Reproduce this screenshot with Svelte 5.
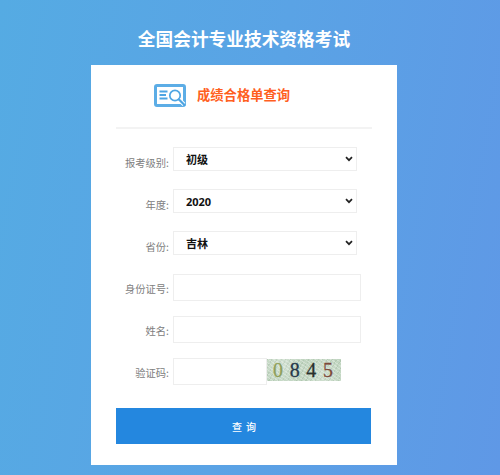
<script>
  const selects = [
    { label: '报考级别:', options: ['初级', '中级', '高级'] },
    { label: '年度:', options: ['2020', '2019', '2018'] },
    { label: '省份:', options: ['吉林', '北京', '上海'] }
  ];
  const inputs = ['身份证号:', '姓名:'];
  const digits = [
    { c: '0', color: '#8f9f5a' },
    { c: '8', color: '#26384a' },
    { c: '4', color: '#2a302c' },
    { c: '5', color: '#7d4a3a' }
  ];
</script>

<div class="page">
  <h1>全国会计专业技术资格考试</h1>
  <main class="card">
    <header class="head">
      <svg class="icon" width="33" height="24" viewBox="0 0 33 24" aria-hidden="true">
        <rect x="1.500" y="1.500" width="29" height="20" rx="1.500" fill="#fff" stroke="#5cade6" stroke-width="3"/>
        <path d="M5.500 7.500H13.500M5.500 11H12M5.500 14.500H13.500" stroke="#4ea5e3" stroke-width="1.800" fill="none"/>
        <circle cx="21" cy="11.500" r="6.800" fill="#fff"/>
        <circle cx="21" cy="11.500" r="5.200" fill="#fff" stroke="#4ea5e3" stroke-width="1.700"/>
        <path d="M25 15.500L30 20.500" stroke="#fff" stroke-width="4"/>
        <path d="M25 15.500L30.500 21" stroke="#4ea5e3" stroke-width="2.200" stroke-linecap="round"/>
      </svg>
      <span class="subtitle">成绩合格单查询</span>
    </header>

    <form class="form" onsubmit={(e) => e.preventDefault()}>
      {#each selects as s}
        <div class="row select-row">
          <span class="label">{s.label}</span>
          <select>
            {#each s.options as o}<option>{o}</option>{/each}
          </select>
        </div>
      {/each}
      {#each inputs as l}
        <div class="row">
          <span class="label">{l}</span>
          <input type="text" />
        </div>
      {/each}
      <div class="row">
        <span class="label">验证码:</span>
        <input class="code" type="text" />
        <div class="captcha">
          {#each digits as d}<span style="color: {d.color}">{d.c}</span>{/each}
        </div>
      </div>
      <button type="submit">查 询</button>
    </form>
  </main>
</div>

<style>
  :global(body) {
    margin: 0;
  }
  .page {
    box-sizing: border-box;
    height: 475px;
    padding-top: 26px;
    background: linear-gradient(100deg, #55abe3 0%, #5aa3e5 50%, #5f98e6 100%);
    font-family: "Noto Sans CJK SC", "Liberation Sans", sans-serif;
    overflow: hidden;
  }
  h1 {
    margin: 0 0 12px;
    width: 488px;
    height: 27px;
    line-height: 24px;
    text-align: center;
    font-size: 17.700px;
    font-weight: 700;
    color: #fff;
  }
  .card {
    box-sizing: border-box;
    width: 306px;
    height: 400px;
    margin-left: 91px;
    padding: 0 25px;
    background: #fff;
  }
  .head {
    display: flex;
    align-items: center;
    height: 62px;
    padding-left: 38px;
    border-bottom: 2px solid #f3f3f3;
  }
  .icon {
    margin-right: 10px;
    flex: none;
  }
  .subtitle {
    font-size: 13.300px;
    font-weight: 700;
    color: #ff5f1f;
    line-height: 20px;
    margin-bottom: 2px;
  }
  .form {
    display: flex;
    flex-direction: column;
    padding-top: 18px;
  }
  .row {
    display: flex;
    align-items: center;
    margin-bottom: 15px;
  }
  .select-row {
    margin-bottom: 18px;
  }
  .select-row:nth-child(3) {
    margin-bottom: 19px;
  }
  .label {
    box-sizing: border-box;
    width: 53px;
    margin-right: 4px;
    padding-top: 2px;
    flex: none;
    text-align: right;
    font-size: 10.300px;
    line-height: 14px;
    color: #808080;
    white-space: nowrap;
  }
  .select-row .label {
    padding-top: 8px;
  }
  select {
    box-sizing: border-box;
    width: 184px;
    height: 24px;
    padding: 0 8px 0 12px;
    border: 1px solid #eee;
    border-radius: 0;
    appearance: none;
    background: #fff url("data:image/svg+xml,%3Csvg xmlns='http://www.w3.org/2000/svg' width='8' height='6'%3E%3Cpath d='M1 1.200L4 4.200L7 1.200' fill='none' stroke='%23222' stroke-width='1.700'/%3E%3C/svg%3E") no-repeat right 3px center;
    color: #111;
    font-family: "Open Sans", "Noto Sans CJK SC", sans-serif;
    font-size: 11px;
    font-weight: 700;
    outline: none;
  }
  input {
    box-sizing: border-box;
    width: 188px;
    height: 27px;
    border: 1px solid #eee;
    background: #fff;
    outline: none;
    padding: 0 8px;
  }
  .code {
    width: 94px;
  }
  .captcha {
    align-self: flex-start;
    display: flex;
    justify-content: space-between;
    align-items: center;
    box-sizing: border-box;
    width: 74px;
    height: 22px;
    margin-top: 1px;
    padding: 0 8px 0 6px;
    background:
      radial-gradient(circle at 20% 30%, rgba(255,255,255,0.35), transparent 40%),
      radial-gradient(circle at 75% 70%, rgba(255,255,255,0.3), transparent 45%),
      repeating-linear-gradient(35deg, rgba(255,255,255,0.28) 0 1px, transparent 1px 3px),
      repeating-linear-gradient(120deg, rgba(110,140,110,0.2) 0 1px, transparent 1px 4px),
      #bdd3bd;
    font-family: "Liberation Serif", serif;
    font-size: 20px;
    line-height: 22px;
    -webkit-text-stroke: 0.3px currentColor;
  }
  button {
    width: 255px;
    height: 36px;
    margin-top: 8px;
    padding: 0 0 0 2px;
    border: 0;
    background: #2487df;
    color: #fff;
    font-family: "Noto Sans CJK SC", sans-serif;
    font-size: 10px;
    font-weight: 500;
    letter-spacing: 1px;
  }
</style>
